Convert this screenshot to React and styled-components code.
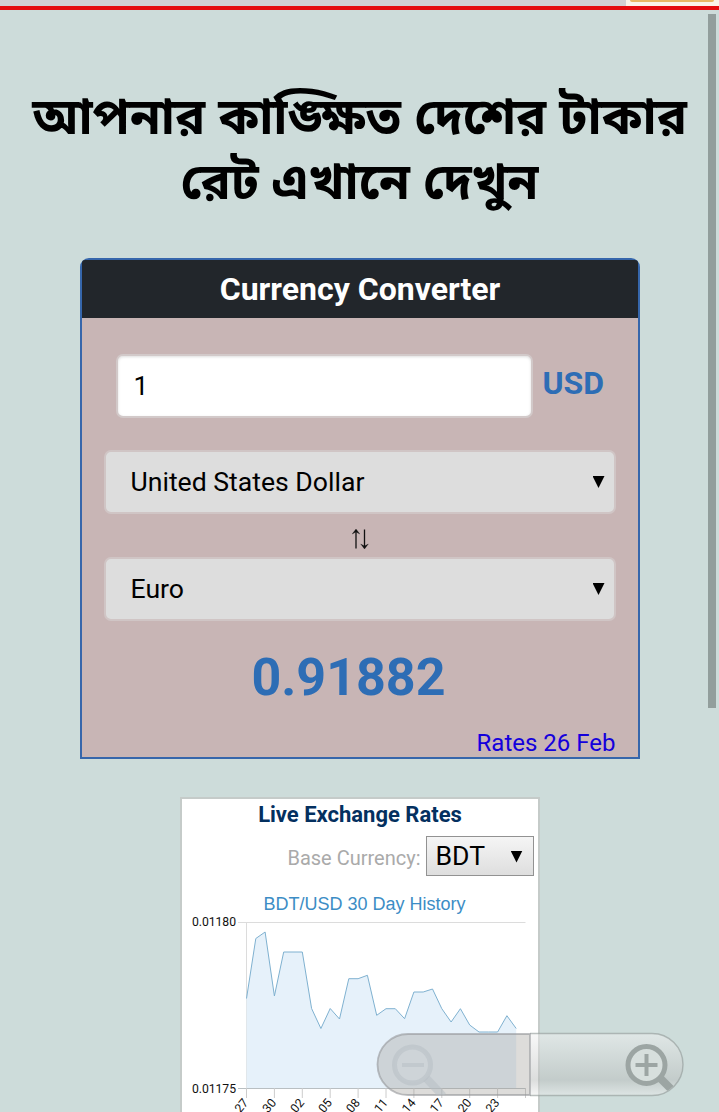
import React from 'react';
import styled, { createGlobalStyle } from 'styled-components';

const GlobalStyle = createGlobalStyle`
  * { box-sizing: border-box; }
  html, body { margin: 0; padding: 0; }
  body { background: #cddcda; overflow: hidden; font-family: Roboto, "Liberation Sans", sans-serif; color: #000; }
`;

const Screen = styled.div`
  position: relative;
  display: flex;
  flex-direction: column;
  align-items: center;
  width: 719px;
  height: 1112px;
  overflow: hidden;
  background: #cddcda;
`;

const TopStrip = styled.div`
  display: flex;
  justify-content: flex-end;
  flex: none;
  width: 100%;
  height: 10px;
  background: #d2d0d3;
  border-bottom: 4px solid #e50b0f;
`;

const TabEdge = styled.div`
  width: 93px;
  height: 6px;
  padding: 0 5px 0 4px;
  background: #fbf3e9;
`;

const TabFill = styled.div`
  height: 2px;
  background: #e9b765;
  border-radius: 0 0 3px 3px;
`;

const Heading = styled.h1`
  flex: none;
  width: 719px;
  height: 130px;
  margin: 79px 0 39px;
  font-family: "Noto Sans Bengali", "Noto Sans", sans-serif;
  font-size: 50.2px;
  font-weight: 700;
  line-height: 65px;
  text-align: center;
  white-space: nowrap;
`;

const Converter = styled.section`
  display: flex;
  flex-direction: column;
  flex: none;
  width: 560px;
  height: 501px;
  border: 2px solid #3666ab;
  border-radius: 9px 9px 0 0;
  background: #c8b5b5;
`;

const ConverterTitle = styled.h2`
  margin: 0;
  height: 58px;
  padding-left: 1px;
  background: #22262b;
  border-radius: 3px 3px 0 0;
  color: #fff;
  font-size: 32px;
  font-weight: 700;
  line-height: 59px;
  text-align: center;
`;

const AmountRow = styled.div`
  display: flex;
  align-items: center;
  gap: 10px;
  height: 63px;
  margin: 36px 0 33px 34px;
`;

const AmountInput = styled.div`
  width: 417px;
  height: 64px;
  padding-left: 16px;
  border: 2px solid #d2c9c9;
  border-radius: 7px;
  background: #fff;
  box-shadow: inset 0 1px 3px #ddd;
  font-size: 26.6px;
  line-height: 60px;
`;

const Code = styled.span`
  color: #2d6db5;
  font-size: 32px;
  font-weight: 700;
  line-height: 59px;
  height: 63px;
`;

const Select = styled.div`
  display: flex;
  align-items: center;
  justify-content: space-between;
  width: 512px;
  height: 64px;
  margin-left: 22px;
  padding: 0 9px 2px 25px;
  border: 2px solid #d0c5c5;
  border-radius: 7px;
  background: #ddd;
  font-size: 26.6px;
`;

const Arrow = styled.i`
  width: ${p => p.$size}px;
  height: ${p => p.$size}px;
  margin-top: 2px;
  background: #000;
  clip-path: polygon(0 0, 100% 0, 50% 100%);
`;

const SwapRow = styled.div`
  display: flex;
  justify-content: center;
  align-items: center;
  height: 43px;
  padding-top: 6px;
`;

const Result = styled.div`
  height: 70px;
  margin-top: 22px;
  padding-right: 22px;
  color: #2d6db5;
  font-size: 52px;
  font-weight: 700;
  line-height: 70px;
  text-align: center;
`;

const RatesLink = styled.a`
  align-self: flex-end;
  margin: 17px 22px 0 0;
  color: #1400dc;
  font-size: 24px;
  line-height: 26px;
`;

const RatesCard = styled.section`
  display: flex;
  flex-direction: column;
  flex: none;
  width: 360px;
  height: 330px;
  margin-top: 38px;
  border: 2px solid #c5cbc9;
  background: #fff;
`;

const RatesTitle = styled.h3`
  margin: 0;
  height: 37px;
  padding-left: 1px;
  color: #04305f;
  font-size: 22px;
  font-weight: 700;
  line-height: 31px;
  text-align: center;
`;

const BaseRow = styled.div`
  display: flex;
  justify-content: flex-end;
  align-items: center;
  gap: 5px;
  height: 40px;
  padding-right: 4px;
`;

const BaseLabel = styled.span`
  color: #aaa;
  font-size: 20px;
  padding-top: 4px;
`;

const BaseSelect = styled.div`
  display: flex;
  align-items: center;
  justify-content: space-between;
  width: 108px;
  height: 40px;
  padding: 0 10px 1px 9px;
  border: 1px solid #929292;
  background: linear-gradient(#f5f5f5, #dedede);
  font-size: 26.6px;
`;

const Chart = styled.svg`
  display: block;
  flex: none;
  width: 356px;
  height: 236px;
`;

const ScrollThumb = styled.div`
  position: absolute;
  top: 14px;
  right: 3px;
  width: 8px;
  height: 694px;
  background: #929e9c;
`;

const ZoomControl = styled.svg`
  position: absolute;
  left: 374px;
  top: 1030px;
  width: 312px;
  height: 70px;
`;

const values = [998.5, 938.5, 932, 996, 952, 952, 952, 1008.5, 1028.5, 1008.5, 1019, 978.7, 978.7, 975.3, 1015.3,
  1008.7, 1008.7, 1018.7, 992, 992, 989, 1008.7, 1022, 1008.7, 1025, 1032, 1032, 1032, 1015.7, 1028.5];
const days = ['27', '30', '02', '05', '08', '11', '14', '17', '20', '23'];
const line = values.map((y, i) => `${(246.5 + i * 9.3).toFixed(1)},${y}`).join(' ');

function HistoryChart() {
  return (
    <Chart viewBox="182 876 356 236">
      <text x="364.5" y="909.5" textAnchor="middle" fontFamily="Liberation Sans, sans-serif" fontSize="18" textLength="202" fill="#3c8dc5">BDT/USD 30 Day History</text>
      <path d="M238 922.5H525.5M246.5 922V1088" stroke="#dcdcdc" fill="none" />
      <polygon points={`246.5,1088 ${line} 516.2,1088`} fill="#e6f1fa" />
      <polyline points={line} fill="none" stroke="#7fb1d0" strokeWidth="1" />
      <path d="M238 1088.5H525.5" stroke="#b9bfc2" />
      <g fontFamily="Roboto, sans-serif" fontSize="12.2" fill="#111">
        <text x="236" y="926" textAnchor="end" textLength="44">0.01180</text>
        <text x="236" y="1093" textAnchor="end" textLength="44">0.01175</text>
        {days.map((d, i) => {
          const x = 246.5 + i * 27.9;
          return (
            <g key={d}>
              <path d={`M${x} 1088V1098`} stroke="#ccc" />
              <text transform={`translate(${x + 2.5} 1103) rotate(-50)`} textAnchor="end">{d}</text>
            </g>
          );
        })}
        <path d="M525.5 1088V1098" stroke="#ccc" />
      </g>
    </Chart>
  );
}

function ZoomButtons() {
  return (
    <ZoomControl viewBox="374 1030 312 70">
      <defs>
        <linearGradient id="plusFill" x1="0" y1="0" x2="0" y2="1">
          <stop offset="0" stopColor="#f2f2f2" stopOpacity=".5" />
          <stop offset=".75" stopColor="#b9bcbb" stopOpacity=".5" />
          <stop offset="1" stopColor="#eee" stopOpacity=".5" />
        </linearGradient>
        <clipPath id="pill">
          <path d="M408 1034H652a30.5 30.5 0 0 1 0 61H408a30.5 30.5 0 0 1 0-61Z" />
        </clipPath>
      </defs>
      <path d="M530 1033.5H652a31 31 0 0 1 0 62H530Z" fill="url(#plusFill)" />
      <path d="M530 1033.5H652a31 31 0 0 1 0 62H530" fill="none" stroke="#8f9896" strokeOpacity=".6" strokeWidth="1.4" />
      <path d="M530 1034H408a30.5 30.5 0 0 0 0 61H530Z" fill="#9e9a96" fillOpacity=".35" />
      <path d="M530 1034H408a30.5 30.5 0 0 0 0 61H530Z" fill="none" stroke="#949699" strokeOpacity=".6" strokeWidth="1.8" />
      <g stroke="#b6bdc4" strokeOpacity=".5" fill="none" clipPath="url(#pill)">
        <circle cx="412.5" cy="1065" r="18" strokeWidth="5" fill="#d5d9dd" fillOpacity=".25" />
        <path d="M402 1065H424" strokeWidth="4" />
        <path d="M426.5 1078.5L443 1096" strokeWidth="8" />
      </g>
      <g stroke="#9ca5a3" fill="none" clipPath="url(#pill)">
        <path d="M659.5 1077.5L673 1091" strokeWidth="8" />
        <circle cx="646.5" cy="1065" r="18.5" strokeWidth="5" fill="#d7dfdd" />
        <path d="M635.5 1065H657.5M646.5 1054V1076" strokeWidth="4" />
      </g>
    </ZoomControl>
  );
}

function SwapIcon() {
  return (
    <svg width="20" height="22" viewBox="0 0 20 22" fill="none" stroke="#111" strokeWidth="1.3">
      <path d="M6 20.5V2M14.5 1.5V20" />
      <path d="M2.2 6L6 1L9.8 6L6 3.9ZM10.7 16L14.5 21L18.3 16L14.5 18.1Z" fill="#111" strokeWidth=".3" />
    </svg>
  );
}

export default function App() {
  return (
    <Screen>
      <GlobalStyle />
      <TopStrip><TabEdge><TabFill /></TabEdge></TopStrip>
      <Heading>আপনার কাঙ্ক্ষিত দেশের টাকার<br />রেট এখানে দেখুন</Heading>
      <Converter>
        <ConverterTitle>Currency Converter</ConverterTitle>
        <AmountRow>
          <AmountInput>1</AmountInput>
          <Code>USD</Code>
        </AmountRow>
        <Select>United States Dollar<Arrow $size={12} /></Select>
        <SwapRow><SwapIcon /></SwapRow>
        <Select>Euro<Arrow $size={12} /></Select>
        <Result>0.91882</Result>
        <RatesLink>Rates 26 Feb</RatesLink>
      </Converter>
      <RatesCard>
        <RatesTitle>Live Exchange Rates</RatesTitle>
        <BaseRow>
          <BaseLabel>Base Currency:</BaseLabel>
          <BaseSelect>BDT<Arrow $size={12} /></BaseSelect>
        </BaseRow>
        <HistoryChart />
      </RatesCard>
      <ScrollThumb />
      <ZoomButtons />
    </Screen>
  );
}
